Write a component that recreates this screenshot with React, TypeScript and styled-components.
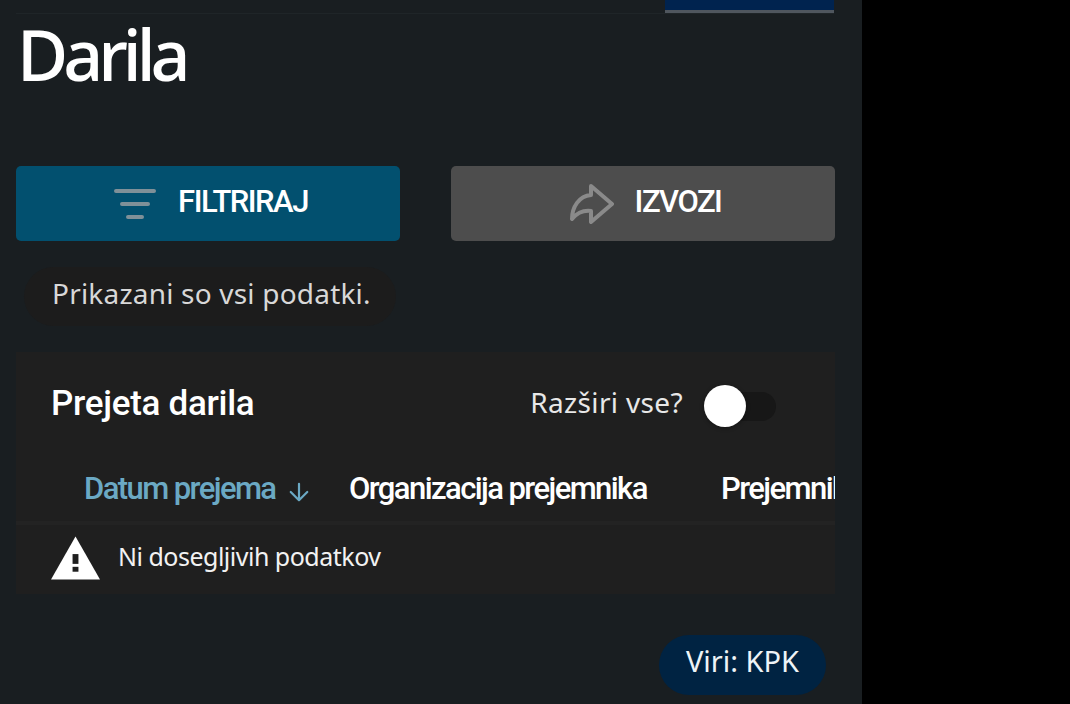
import React from "react";
import styled, { createGlobalStyle } from "styled-components";

const Global = createGlobalStyle`
  html, body { margin: 0; padding: 0; background: #000; height: 704px; overflow: hidden; }
  * { box-sizing: border-box; }
`;
const Panel = styled.main`
  width: 862px; height: 704px; background: #191e21; color: #fff; overflow: hidden;
  font-family: "Noto Sans", sans-serif; padding: 0 28px 0 16px;
`;
const TopBar = styled.div`
  height: 14px; border-bottom: 1px solid #1f2528; display: flex; justify-content: flex-end;
`;
const ActiveTab = styled.div`
  width: 169px; height: 13px; background: #00234f; border-bottom: 3px solid #4f565e;
`;
const Title = styled.h1`
  margin: 0; padding-left: 1px; height: 152px; font-size: 70px; line-height: 80px; font-weight: 500; letter-spacing: -5px;
`;
const Actions = styled.div`
  display: grid; grid-template-columns: 384px 384px; column-gap: 51px; height: 75px;
`;
const ActionButton = styled.div<{ $bg: string }>`
  background: ${p => p.$bg}; border-radius: 5px; display: flex; align-items: center; justify-content: center; gap: 21px; padding-left: 5px;
  font-family: "Roboto", sans-serif; font-size: 31px; font-weight: 500; letter-spacing: -1.5px;
`;
const ActionLabel = styled.span`
  padding-bottom: 4px;
`;
const Status = styled.div`
  margin: 26px 0 26px 8px; width: 372px; height: 59px; border-radius: 30px; background: #1c1c1c; color: #d8d8d8;
  display: flex; align-items: center; padding: 0 0 8px 28px; font-size: 28px; letter-spacing: 0.2px;
`;
const Card = styled.section`
  width: 819px; height: 242px; background: #1f1f1f; overflow: hidden;
`;
const CardHead = styled.div`
  height: 109px; display: flex; align-items: center; justify-content: space-between; padding: 0 59px 0 35px;
`;
const CardTitle = styled.h2`
  margin: 0; padding-bottom: 6px; font-family: "Roboto", sans-serif; font-size: 35px; font-weight: 500; letter-spacing: -0.3px;
`;
const ExpandRow = styled.div`
  display: flex; align-items: center; gap: 31px; font-size: 28px; letter-spacing: 0.35px; color: #e8e8e8;
`;
const ExpandLabel = styled.span`
  padding-bottom: 9px;
`;
const Track = styled.div`
  position: relative; width: 62px; height: 29px; border-radius: 15px; background: #171717;
`;
const Thumb = styled.span`
  position: absolute; left: -10px; top: -7px; width: 42px; height: 42px; border-radius: 50%; background: #fff; box-shadow: 0 1px 4px rgba(0,0,0,.35);
`;
const HeadRow = styled.div`
  height: 64px; padding: 0 0 6px 68px; display: flex; align-items: center; white-space: nowrap; border-bottom: 4px solid #232323;
  font-family: "Roboto", sans-serif; font-size: 31px; font-weight: 500; letter-spacing: -1.58px;
`;
const HeadCell = styled.div<{ $w: number; $c?: string }>`
  flex: 0 0 ${p => p.$w}px; color: ${p => p.$c || "#fff"}; display: flex; align-items: center; gap: 13px;
`;
const SortArrow = styled.svg`
  margin-top: 8px; flex: none;
`;
const EmptyRow = styled.div`
  display: flex; align-items: center; gap: 18px; padding: 11px 0 0 35px; font-size: 25px; letter-spacing: -0.5px; color: #f2f2f2;
`;
const EmptyText = styled.span`
  padding-bottom: 5px;
`;
const Footer = styled.div`
  display: flex; justify-content: flex-end; padding: 41px 8px 0 0;
`;
const Source = styled.div`
  width: 167px; height: 60px; border-radius: 30px; background: #002342; display: flex; align-items: center; justify-content: center;
  padding-bottom: 9px; font-size: 29px; letter-spacing: 0; color: #eef4f7;
`;

export default function App() {
  return (
    <>
      <Global />
      <Panel>
        <TopBar><ActiveTab /></TopBar>
        <Title>Darila</Title>
        <Actions>
          <ActionButton $bg="#02506f">
            <svg width="44" height="32" viewBox="0 0 44 32" fill="none" stroke="#7f9098" strokeWidth="4" strokeLinecap="round">
              <path d="M3 3h38M9 16h26M15 29h14" />
            </svg>
            <ActionLabel>FILTRIRAJ</ActionLabel>
          </ActionButton>
          <ActionButton $bg="#4d4d4d">
            <svg width="44" height="40" viewBox="0 0 44 40" fill="none" stroke="#8a8a8a" strokeWidth="4" strokeLinejoin="round">
              <path d="M21 2 L42 20 L21 38 L21 27 C13 26 7 29 2 35 C2 23 9 12 21 11 Z" />
            </svg>
            <ActionLabel>IZVOZI</ActionLabel>
          </ActionButton>
        </Actions>
        <Status>Prikazani so vsi podatki.</Status>
        <Card>
          <CardHead>
            <CardTitle>Prejeta darila</CardTitle>
            <ExpandRow>
              <ExpandLabel>Razširi vse?</ExpandLabel>
              <Track><Thumb /></Track>
            </ExpandRow>
          </CardHead>
          <HeadRow>
            <HeadCell $w={265} $c="#6ba9c4">
              Datum prejema
              <SortArrow width="22" height="22" viewBox="0 0 24 24" fill="none" stroke="#6ba9c4" strokeWidth="2.4" strokeLinecap="round" strokeLinejoin="round">
                <path d="M12 3v18M3 12l9 9 9-9" />
              </SortArrow>
            </HeadCell>
            <HeadCell $w={372}>Organizacija prejemnika</HeadCell>
            <HeadCell $w={200}>Prejemnik</HeadCell>
          </HeadRow>
          <EmptyRow>
            <svg width="49" height="44" viewBox="0 0 50 44">
              <path fill="#fff" d="M25 0 L50 44 H0 Z" />
              <rect x="22" y="18" width="6" height="10" fill="#1f1f1f" />
              <rect x="22" y="31" width="6" height="5" fill="#1f1f1f" />
            </svg>
            <EmptyText>Ni dosegljivih podatkov</EmptyText>
          </EmptyRow>
        </Card>
        <Footer><Source>Viri: KPK</Source></Footer>
      </Panel>
    </>
  );
}
